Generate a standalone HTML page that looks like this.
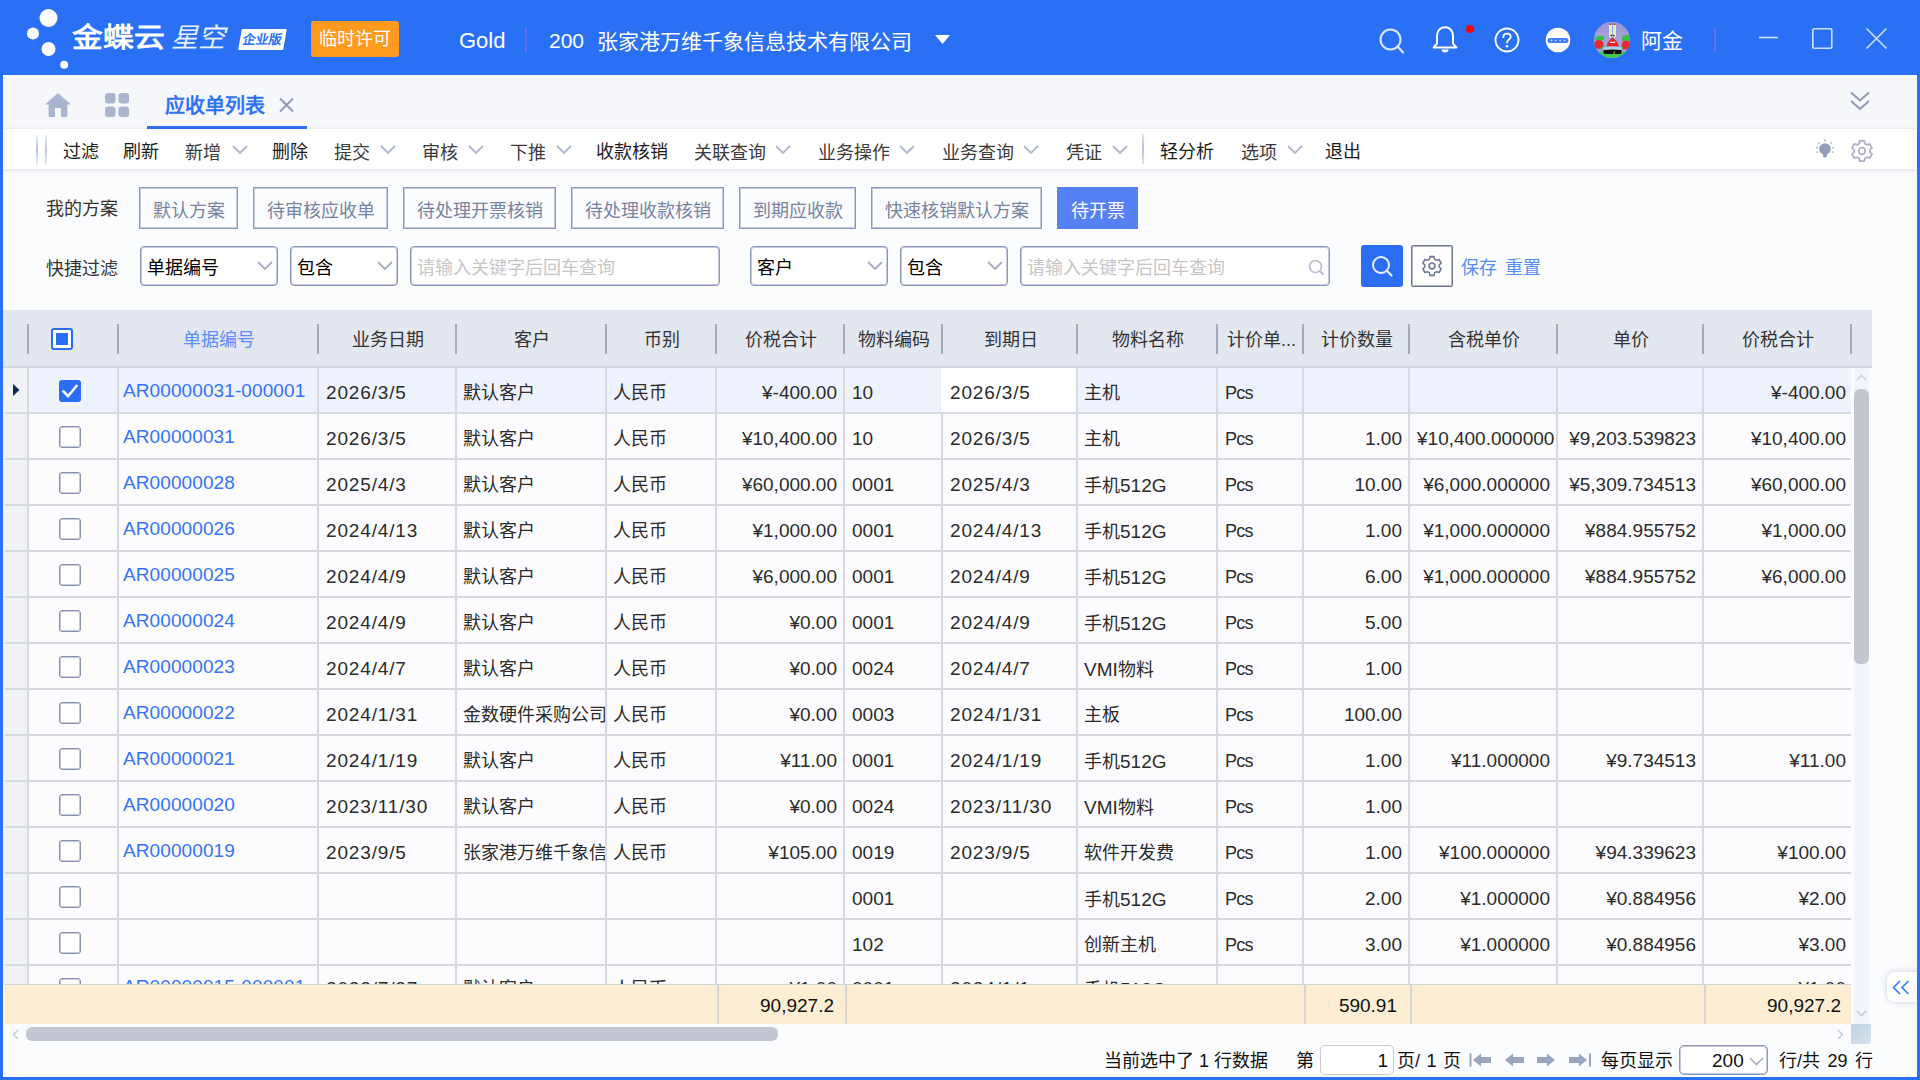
<!DOCTYPE html>
<html lang="zh-CN">
<head>
<meta charset="utf-8">
<title>应收单列表</title>
<style>
*{box-sizing:border-box;margin:0;padding:0}
html,body{width:1920px;height:1080px;overflow:hidden}
body{position:relative;background:#2a70f5;font-family:"Liberation Sans",sans-serif;font-size:18px;color:#222}
.a{position:absolute}
#hdr{position:absolute;left:0;top:0;width:1920px;height:75px;background:#2a70f5;color:#fff}
#main{position:absolute;left:3px;top:75px;width:1914px;height:1002px;background:#fbfcfe;overflow:hidden}
#tabs{position:absolute;left:0;top:0;width:1914px;height:54px;background:#f5f7fb}
#tool{position:absolute;left:0;top:54px;width:1914px;height:40px;background:#fff;box-shadow:0 1px 4px rgba(60,70,100,.18)}
.tb{position:absolute;top:3px;height:40px;line-height:40px;font-size:18px;color:#1c1c1c;white-space:nowrap}
.tb.d{color:#3a3a3a;top:4px}
.chev{position:absolute;top:16px}
.sch{position:absolute;top:112px;height:42px;border:1px solid #8c98b7;box-shadow:inset 0 0 0 1px rgba(140,152,183,.5);color:#7783a0;font-size:18px;line-height:46px;text-align:center;white-space:nowrap}
.sel1{position:absolute;top:171px;height:40px;border:1px solid #8c98b7;box-shadow:inset 0 0 0 1px rgba(140,152,183,.5);border-radius:4px;background:#fff;font-size:18px;line-height:42px;color:#000;padding-left:6px;white-space:nowrap}
.ph{color:#c6c6c6}
#gh{position:absolute;left:0;top:235px;width:1869px;height:56px;background:#e3e7f0}
#ghl{position:absolute;left:0;top:291px;width:1869px;height:2px;background:#d3d6dd}
.hs{position:absolute;top:14px;width:2px;height:30px;background:#a6abb8}
.ht{position:absolute;top:0;height:56px;line-height:61px;text-align:center;font-size:18px;color:#333;white-space:nowrap;overflow:hidden}
.hl{color:#5b8df6}
.hchk{position:absolute;left:48px;top:18px;width:22px;height:22px;border:2px solid #2b6ef3;border-radius:3px;background:#fff}
.hchk b{position:absolute;left:3px;top:3px;width:12px;height:12px;background:#2b6ef3}
#gb{position:absolute;left:0;top:293px;width:1848px;height:616px;overflow:hidden;background:#fcfcfe}
.row{position:absolute;left:0;width:1848px;height:46px}
.row.sel{background:#eef2fd}
.ind{position:absolute;left:0;top:0;width:26px;height:46px;background:#f0f2f6;border-right:2px solid #d6d9e0}
.row:after{content:"";position:absolute;left:2px;right:0;bottom:0;height:2px;background:#d6d9e0}
.c{position:absolute;top:0;height:46px;line-height:49px;border-left:2px solid #d6d9e0;padding:0 6px 0 7px;font-size:19px;color:#2b2b2b;white-space:nowrap;overflow:hidden}
.c.z{font-size:18px;line-height:51px;padding-left:6px}
.c.z i{font-style:normal;font-size:19px}
.c.r{text-align:right}
.c.d{letter-spacing:.85px}
.c.u{font-size:18px;letter-spacing:-.7px;line-height:50px}
.c.last{padding-right:4px}
.row.lr .c{line-height:45px}
.row.lr .c.z{line-height:47px}
.row.lr .c.lk{line-height:42px}
.c.lk{color:#3673f4;line-height:46px;padding-left:4px;letter-spacing:.1px}
.c.foc{background:#fff;border-left-color:#fff;height:44px}
.cb{position:absolute;left:56px;top:12px;width:22px;height:22px;border:1px solid #8893ae;box-shadow:inset 0 0 0 1px rgba(136,147,174,.5);border-radius:3px;background:#fff}
.cb.on{border:none;box-shadow:none;background:#2b6ef3}
.cb.on svg{position:absolute;left:0;top:0}
.vline{position:absolute;top:0;width:2px;height:616px;background:#d6d9e0}
#vs{position:absolute;left:1851px;top:293px;width:15px;height:656px;background:#f2f5fb}
#vs .th{position:absolute;left:0px;top:21px;width:15px;height:275px;border-radius:6px;background:#c2c7d1}
#sum{position:absolute;left:2px;top:909px;width:1846px;height:40px;background:#fdeed3;border-top:1.5px solid #cfd2d8}
.sc{position:absolute;top:0;height:39px;line-height:42px;font-size:19px;color:#111;text-align:right;border-left:2px solid #d9d6cf;border-right:2px solid #d9d6cf;padding-right:9px}
#hsb{position:absolute;left:0;top:949px;width:1869px;height:20px;background:#fbfcfe}
#hsb .th{position:absolute;left:23px;top:3px;width:752px;height:14px;border-radius:6px;background:#c2c7d1}
.pg{position:absolute;top:969px;height:33px;line-height:35px;font-size:18px;color:#111;white-space:nowrap}
</style>
</head>
<body>
<div id="hdr">
  <!-- logo dots -->
  <svg class="a" style="left:20px;top:4px" width="60" height="70" viewBox="20 4 60 70">
    <circle cx="48.5" cy="18" r="9" fill="#fff"/>
    <circle cx="33" cy="33.5" r="6" fill="#fff"/>
    <circle cx="48.5" cy="49" r="7" fill="#fff"/>
    <circle cx="64.2" cy="64.8" r="4" fill="#fff"/>
  </svg>
  <div class="a" style="left:72px;top:19px;height:38px;line-height:38px;font-size:27px;font-weight:bold;color:#fff;white-space:nowrap;transform:scaleX(1.14);transform-origin:0 0">金蝶云</div>
  <div class="a" style="left:171px;top:19px;height:38px;line-height:38px;font-size:27px;font-weight:normal;font-style:italic;color:#e8f0ff;white-space:nowrap">星空</div>
  <div class="a" style="left:240px;top:29px;width:45px;height:21px;background:#fff;transform:skewX(-10deg);border-radius:1px"></div>
  <div class="a" style="left:240px;top:29px;width:45px;height:21px;line-height:21px;text-align:center;font-size:13px;font-weight:bold;color:#2a70f5;transform:skewX(-10deg);white-space:nowrap">企业版</div>
  <div class="a" style="left:311px;top:21px;width:88px;height:36px;background:#ff9a1e;border-radius:3px;color:#fff;font-size:18px;line-height:36px;text-align:center;white-space:nowrap">临时许可</div>
  <div class="a" style="left:459px;top:23px;height:36px;line-height:36px;font-size:22px;color:#fff">Gold</div>
  <div class="a" style="left:525px;top:28px;width:2px;height:24px;background:#5f6ff2"></div>
  <div class="a" style="left:549px;top:23px;height:36px;line-height:36px;font-size:21px;color:#fff;white-space:nowrap">200</div>
  <div class="a" style="left:597px;top:24px;height:36px;line-height:36px;font-size:21px;color:#fff;white-space:nowrap">张家港万维千象信息技术有限公司</div>
  <svg class="a" style="left:935px;top:35px" width="15" height="9" viewBox="0 0 15 9"><path d="M0 0H15L7.5 9Z" fill="#fff"/></svg>
  <!-- search -->
  <svg class="a" style="left:1377px;top:26px" width="30" height="30" viewBox="0 0 30 30"><circle cx="13.5" cy="13.5" r="10" fill="none" stroke="#dbe7ff" stroke-width="2"/><path d="M20.5 20.5L26 26.5" stroke="#dbe7ff" stroke-width="2.2" stroke-linecap="round"/></svg>
  <!-- bell -->
  <svg class="a" style="left:1430px;top:24px" width="30" height="32" viewBox="0 0 30 32"><path d="M15 3.2C9.8 3.2 7 7.3 7 12V19.5L3.6 23.4H26.4L23 19.5V12C23 7.3 20.2 3.2 15 3.2Z" fill="none" stroke="#fff" stroke-width="2" stroke-linejoin="round"/><path d="M11.5 25.5A3.5 3 0 0 0 18.5 25.5Z" fill="#fff"/></svg>
  <div class="a" style="left:1466px;top:25px;width:8px;height:8px;border-radius:4px;background:#f00"></div>
  <!-- help -->
  <svg class="a" style="left:1494px;top:27px" width="26" height="26" viewBox="0 0 26 26"><circle cx="13" cy="13" r="11.5" fill="none" stroke="#fff" stroke-width="1.8"/><path d="M9.3 10.2C9.3 7.9 11 6.6 13 6.6C15 6.6 16.7 7.9 16.7 9.9C16.7 12.4 13 12.6 13 15.6" fill="none" stroke="#fff" stroke-width="1.8" stroke-linecap="round"/><circle cx="13" cy="19.2" r="1.3" fill="#fff"/></svg>
  <!-- robot -->
  <svg class="a" style="left:1545px;top:27px" width="26" height="26" viewBox="0 0 26 26"><circle cx="13" cy="13" r="12.3" fill="#fff"/><rect x="2.6" y="11" width="20.8" height="5" rx="2.5" fill="#3b7af6"/><circle cx="6.5" cy="13.5" r="0.9" fill="#b9d0ff"/><circle cx="10.8" cy="13.5" r="0.9" fill="#b9d0ff"/><circle cx="15.2" cy="13.5" r="0.9" fill="#b9d0ff"/><circle cx="19.5" cy="13.5" r="0.9" fill="#b9d0ff"/></svg>
  <!-- avatar -->
  <svg class="a" style="left:1594px;top:22px" width="36" height="36" viewBox="0 0 36 36">
    <defs><clipPath id="av"><circle cx="18" cy="18" r="18"/></clipPath></defs>
    <g clip-path="url(#av)">
      <rect width="36" height="36" fill="#a59fd8"/>
      <rect x="0" y="0" width="36" height="10" fill="#9d99d6"/>
      <path d="M4 30Q18 27.5 32 30L36 36H0Z" fill="#3ec84c"/>
      <rect x="15" y="1.8" width="3" height="14" rx="1.4" fill="#d9f5b2"/><rect x="19" y="1.8" width="3" height="14" rx="1.4" fill="#d9f5b2"/>
      <rect x="15.3" y="1.6" width="2.2" height="1.2" fill="#5a2a2a"/><rect x="19.4" y="1.6" width="2.2" height="1.2" fill="#5a2a2a"/>
      <circle cx="17.2" cy="13.6" r="0.8" fill="#111"/><circle cx="19.8" cy="13.6" r="0.8" fill="#111"/>
      <path d="M18.4 15.5Q19.5 16.5 20.5 17.5Q24.5 20 24.8 25.8H12.6Q13 20 16.5 17.5Q17.5 16.5 18.4 15.5Z" fill="#e6232a"/>
      <rect x="16" y="19.7" width="5.2" height="1.3" rx="0.4" fill="#fff"/>
      <ellipse cx="4.8" cy="22.3" rx="4.6" ry="4.6" fill="#e32a2e"/>
      <ellipse cx="32.2" cy="23" rx="4.4" ry="4.8" fill="#e32a2e"/>
      <path d="M0.8 18Q1 14.5 3.5 14.2Q6 13.2 8 14Q10.8 14 10.6 16.2L8 18.3Z" fill="#3cba4a"/>
      <path d="M28 18.8Q27.6 14 30 13.4Q33 12.4 36 14V18.8Z" fill="#3cba4a"/>
      <path d="M6.5 27.5L10.5 23.5" stroke="#3cba4a" stroke-width="1.2"/><path d="M29.5 28L27.5 23.5" stroke="#3cba4a" stroke-width="1.2"/>
      <path d="M9.6 25.5Q18 23 27.3 25.5V29H9.6Z" fill="#a8d3ee"/>
      <path d="M9.2 28.2Q18 27 27.8 28.2L27 32H10Z" fill="#0c0c0c"/>
      <rect x="19.6" y="29.6" width="1" height="2.2" fill="#e9c21b"/>
    </g>
  </svg>
  <div class="a" style="left:1641px;top:23px;height:36px;line-height:36px;font-size:21px;color:#fff;white-space:nowrap">阿金</div>
  <div class="a" style="left:1714px;top:28px;width:2px;height:24px;background:#5f6ff2"></div>
  <svg class="a" style="left:1755px;top:24px" width="140" height="30" viewBox="1755 24 140 30"><path d="M1759 37.5H1778" stroke="#cfe0ff" stroke-width="1.6"/><rect x="1812.8" y="28.8" width="19" height="19.4" rx="1.5" fill="none" stroke="#cfe0ff" stroke-width="1.6"/><path d="M1866.5 28.5L1886.5 48.5M1886.5 28.5L1866.5 48.5" stroke="#cfe0ff" stroke-width="1.6"/></svg>
</div>

<div id="main">
  <div id="tabs">
    <!-- home -->
    <svg class="a" style="left:42px;top:18px" width="26" height="24" viewBox="0 0 26 24"><path d="M13 0L0 11.5H3.6V22.5Q3.6 24 5 24H10V15H16V24H21Q22.4 24 22.4 22.5V11.5H26Z" fill="#a9b4ce"/></svg>
    <!-- grid -->
    <svg class="a" style="left:102px;top:18px" width="24" height="24" viewBox="0 0 24 24"><rect x="0" y="0" width="10.5" height="10.5" rx="3" fill="#a9b4ce"/><rect x="13.5" y="0" width="10.5" height="10.5" rx="3" fill="#a9b4ce"/><rect x="0" y="13.5" width="10.5" height="10.5" rx="3" fill="#a9b4ce"/><rect x="13.5" y="13.5" width="10.5" height="10.5" rx="3" fill="#a9b4ce"/></svg>
    <div class="a" style="left:162px;top:15px;height:32px;line-height:32px;font-size:20px;font-weight:bold;color:#2e73f3;white-space:nowrap">应收单列表</div>
    <svg class="a" style="left:276px;top:23px" width="15" height="14" viewBox="0 0 15 14"><path d="M1 0.5L14 13.5M14 0.5L1 13.5" stroke="#8e99b3" stroke-width="2"/></svg>
    <div class="a" style="left:144px;top:51px;width:160px;height:3px;background:#2e73f3"></div>
    <svg class="a" style="left:1846px;top:15px" width="22" height="22" viewBox="0 0 22 22"><path d="M2 2.5L11 10.5L20 2.5M2 11L11 19L20 11" fill="none" stroke="#8e99b3" stroke-width="2"/></svg>
  </div>
  <div id="tool">
    <div class="a" style="left:33px;top:6px;width:2px;height:30px;background:linear-gradient(#e8edf7,#b9c5e0,#e8edf7)"></div>
    <div class="a" style="left:42px;top:6px;width:2px;height:30px;background:linear-gradient(#e8edf7,#b9c5e0,#e8edf7)"></div>
    <div class="tb" style="left:60px">过滤</div>
    <div class="tb" style="left:120px">刷新</div>
    <div class="tb d" style="left:182px">新增</div><svg class="chev" style="left:229px" width="16" height="9" viewBox="0 0 16 9"><path d="M1 1L8 8L15 1" fill="none" stroke="#b0b8cc" stroke-width="1.8"/></svg>
    <div class="tb" style="left:269px">删除</div>
    <div class="tb d" style="left:331px">提交</div><svg class="chev" style="left:377px" width="16" height="9" viewBox="0 0 16 9"><path d="M1 1L8 8L15 1" fill="none" stroke="#b0b8cc" stroke-width="1.8"/></svg>
    <div class="tb d" style="left:419px">审核</div><svg class="chev" style="left:465px" width="16" height="9" viewBox="0 0 16 9"><path d="M1 1L8 8L15 1" fill="none" stroke="#b0b8cc" stroke-width="1.8"/></svg>
    <div class="tb d" style="left:507px">下推</div><svg class="chev" style="left:553px" width="16" height="9" viewBox="0 0 16 9"><path d="M1 1L8 8L15 1" fill="none" stroke="#b0b8cc" stroke-width="1.8"/></svg>
    <div class="tb" style="left:593px">收款核销</div>
    <div class="tb d" style="left:691px">关联查询</div><svg class="chev" style="left:772px" width="16" height="9" viewBox="0 0 16 9"><path d="M1 1L8 8L15 1" fill="none" stroke="#b0b8cc" stroke-width="1.8"/></svg>
    <div class="tb d" style="left:815px">业务操作</div><svg class="chev" style="left:896px" width="16" height="9" viewBox="0 0 16 9"><path d="M1 1L8 8L15 1" fill="none" stroke="#b0b8cc" stroke-width="1.8"/></svg>
    <div class="tb d" style="left:939px">业务查询</div><svg class="chev" style="left:1020px" width="16" height="9" viewBox="0 0 16 9"><path d="M1 1L8 8L15 1" fill="none" stroke="#b0b8cc" stroke-width="1.8"/></svg>
    <div class="tb d" style="left:1063px">凭证</div><svg class="chev" style="left:1109px" width="16" height="9" viewBox="0 0 16 9"><path d="M1 1L8 8L15 1" fill="none" stroke="#b0b8cc" stroke-width="1.8"/></svg>
    <div class="a" style="left:1139px;top:5px;width:2px;height:30px;background:linear-gradient(#dfe6f3,#b3c1de,#dfe6f3)"></div>
    <div class="tb" style="left:1157px">轻分析</div>
    <div class="tb d" style="left:1238px">选项</div><svg class="chev" style="left:1284px" width="16" height="9" viewBox="0 0 16 9"><path d="M1 1L8 8L15 1" fill="none" stroke="#b0b8cc" stroke-width="1.8"/></svg>
    <div class="tb" style="left:1322px">退出</div>
    <!-- bulb -->
    <svg class="a" style="left:1812px;top:10px" width="20" height="20" viewBox="0 0 20 20"><circle cx="10" cy="10" r="5.8" fill="#919dba"/><path d="M8 15H12V17.5Q10 19.5 8 17.5Z" fill="#919dba"/><path d="M10 0.5V2.5M3.3 3.3L4.6 4.6M16.7 3.3L15.4 4.6M1 8.5L2.8 9M19 8.5L17.2 9M1.5 13.5L3 12.8M18.5 13.5L17 12.8" stroke="#919dba" stroke-width="1.2"/></svg>
    <!-- gear -->
    <svg class="a" style="left:1847px;top:10px" width="24" height="24" viewBox="0 0 24 24"><path d="M9.7 1.8h4.6l.6 2.9 2 1.1 2.8-.9 2.3 4-2.2 2v2.2l2.2 2-2.3 4-2.8-.9-2 1.1-.6 2.9H9.7l-.6-2.9-2-1.1-2.8.9-2.3-4 2.2-2v-2.2l-2.2-2 2.3-4 2.8.9 2-1.1z" fill="none" stroke="#a9b2c8" stroke-width="1.8" stroke-linejoin="round"/><circle cx="12" cy="12" r="3.3" fill="none" stroke="#a9b2c8" stroke-width="1.8"/></svg>
  </div>

  <!-- scheme row -->
  <div class="a" style="left:43px;top:112px;height:42px;line-height:44px;font-size:18px;color:#333;white-space:nowrap">我的方案</div>
  <div class="sch" style="left:136px;width:99px">默认方案</div>
  <div class="sch" style="left:250px;width:135px">待审核应收单</div>
  <div class="sch" style="left:400px;width:153px">待处理开票核销</div>
  <div class="sch" style="left:568px;width:153px">待处理收款核销</div>
  <div class="sch" style="left:736px;width:117px">到期应收款</div>
  <div class="sch" style="left:868px;width:171px">快速核销默认方案</div>
  <div class="sch" style="left:1054px;width:81px;background:#5581f3;border-color:#5581f3;box-shadow:none;color:#fff">待开票</div>

  <!-- quick filter row -->
  <div class="a" style="left:43px;top:171px;height:40px;line-height:46px;font-size:18px;color:#333;white-space:nowrap">快捷过滤</div>
  <div class="sel1" style="left:137px;width:138px">单据编号<svg class="a" style="left:116px;top:14px" width="16" height="9" viewBox="0 0 16 9"><path d="M1 1L8 8L15 1" fill="none" stroke="#a5adc2" stroke-width="1.8"/></svg></div>
  <div class="sel1" style="left:287px;width:108px">包含<svg class="a" style="left:86px;top:14px" width="16" height="9" viewBox="0 0 16 9"><path d="M1 1L8 8L15 1" fill="none" stroke="#a5adc2" stroke-width="1.8"/></svg></div>
  <div class="sel1 ph" style="left:407px;width:310px">请输入关键字后回车查询</div>
  <div class="sel1" style="left:747px;width:138px">客户<svg class="a" style="left:116px;top:14px" width="16" height="9" viewBox="0 0 16 9"><path d="M1 1L8 8L15 1" fill="none" stroke="#a5adc2" stroke-width="1.8"/></svg></div>
  <div class="sel1" style="left:897px;width:108px">包含<svg class="a" style="left:86px;top:14px" width="16" height="9" viewBox="0 0 16 9"><path d="M1 1L8 8L15 1" fill="none" stroke="#a5adc2" stroke-width="1.8"/></svg></div>
  <div class="sel1 ph" style="left:1017px;width:310px">请输入关键字后回车查询<svg class="a" style="left:287px;top:12px" width="17" height="17" viewBox="0 0 17 17"><circle cx="7.5" cy="7.5" r="6" fill="none" stroke="#b4bccf" stroke-width="1.7"/><path d="M11.8 11.8L15.5 15.5" stroke="#b4bccf" stroke-width="1.8"/></svg></div>
  <div class="a" style="left:1358px;top:170px;width:42px;height:42px;background:#2b6ef3;border-radius:3px"><svg class="a" style="left:10px;top:10px" width="23" height="23" viewBox="0 0 23 23"><circle cx="10" cy="10" r="8" fill="none" stroke="#eaf1ff" stroke-width="2"/><path d="M15.8 15.8L20.5 20.5" stroke="#eaf1ff" stroke-width="2.2" stroke-linecap="round"/></svg></div>
  <div class="a" style="left:1408px;top:170px;width:42px;height:42px;background:#fff;border:1px solid #6e7893;box-shadow:inset 0 0 0 1px rgba(110,120,147,.55);border-radius:2px"><svg class="a" style="left:9px;top:9px" width="22" height="22" viewBox="0 0 24 24"><path d="M9.7 1.8h4.6l.6 2.9 2 1.1 2.8-.9 2.3 4-2.2 2v2.2l2.2 2-2.3 4-2.8-.9-2 1.1-.6 2.9H9.7l-.6-2.9-2-1.1-2.8.9-2.3-4 2.2-2v-2.2l-2.2-2 2.3-4 2.8.9 2-1.1z" fill="none" stroke="#6e7893" stroke-width="1.7" stroke-linejoin="round"/><circle cx="12" cy="12" r="3.2" fill="none" stroke="#6e7893" stroke-width="1.7"/></svg></div>
  <div class="a" style="left:1458px;top:171px;height:40px;line-height:45px;font-size:18px;color:#5a8cf5;white-space:nowrap">保存</div>
  <div class="a" style="left:1502px;top:171px;height:40px;line-height:45px;font-size:18px;color:#5a8cf5;white-space:nowrap">重置</div>

  <!-- grid header -->
  <div id="gh">
<div class="hs" style="left:24px"></div>
<div class="hchk"><b></b></div>
<div class="hs" style="left:114px"></div>
<div class="ht hl" style="left:116px;width:200px">单据编号</div>
<div class="hs" style="left:314px"></div>
<div class="ht" style="left:316px;width:138px">业务日期</div>
<div class="hs" style="left:452px"></div>
<div class="ht" style="left:454px;width:150px">客户</div>
<div class="hs" style="left:602px"></div>
<div class="ht" style="left:604px;width:110px">币别</div>
<div class="hs" style="left:712px"></div>
<div class="ht" style="left:714px;width:128px">价税合计</div>
<div class="hs" style="left:840px"></div>
<div class="ht" style="left:842px;width:98px">物料编码</div>
<div class="hs" style="left:938px"></div>
<div class="ht" style="left:940px;width:135px">到期日</div>
<div class="hs" style="left:1073px"></div>
<div class="ht" style="left:1075px;width:140px">物料名称</div>
<div class="hs" style="left:1213px"></div>
<div class="ht" style="left:1215px;width:86px;text-align:left;padding-left:9px">计价单...</div>
<div class="hs" style="left:1299px"></div>
<div class="ht" style="left:1301px;width:106px">计价数量</div>
<div class="hs" style="left:1405px"></div>
<div class="ht" style="left:1407px;width:148px">含税单价</div>
<div class="hs" style="left:1553px"></div>
<div class="ht" style="left:1555px;width:146px">单价</div>
<div class="hs" style="left:1699px"></div>
<div class="ht" style="left:1701px;width:148px">价税合计</div>
<div class="hs" style="left:1847px"></div>
  </div>
  <div id="ghl"></div>
  <div id="gb">
<div class="row sel" style="top:0px">
<div class="ind"><svg width="7" height="12" viewBox="0 0 7 12" style="position:absolute;left:10px;top:16px"><path d="M0 0L6.5 6L0 12Z" fill="#10295c"/></svg></div>
<div class="cb on"><svg width="22" height="22" viewBox="0 0 22 22"><path d="M4.5 11.5L9 16L17.5 6" fill="none" stroke="#fff" stroke-width="2.6" stroke-linecap="square"/></svg></div>
<div class="c lk" style="left:114px;width:200px">AR00000031-000001</div>
<div class="c d" style="left:314px;width:138px">2026/3/5</div>
<div class="c z" style="left:452px;width:150px">默认客户</div>
<div class="c z" style="left:602px;width:110px">人民币</div>
<div class="c r" style="left:712px;width:128px">¥-400.00</div>
<div class="c" style="left:840px;width:98px">10</div>
<div class="c d foc" style="left:938px;width:135px">2026/3/5</div>
<div class="c z" style="left:1073px;width:140px">主机</div>
<div class="c u" style="left:1213px;width:86px">Pcs</div>
<div class="c r" style="left:1299px;width:106px"></div>
<div class="c r" style="left:1405px;width:148px"></div>
<div class="c r" style="left:1553px;width:146px"></div>
<div class="c r last" style="left:1699px;width:148px">¥-400.00</div>
</div>
<div class="row" style="top:46px">
<div class="ind"></div>
<div class="cb"></div>
<div class="c lk" style="left:114px;width:200px">AR00000031</div>
<div class="c d" style="left:314px;width:138px">2026/3/5</div>
<div class="c z" style="left:452px;width:150px">默认客户</div>
<div class="c z" style="left:602px;width:110px">人民币</div>
<div class="c r" style="left:712px;width:128px">¥10,400.00</div>
<div class="c" style="left:840px;width:98px">10</div>
<div class="c d" style="left:938px;width:135px">2026/3/5</div>
<div class="c z" style="left:1073px;width:140px">主机</div>
<div class="c u" style="left:1213px;width:86px">Pcs</div>
<div class="c r" style="left:1299px;width:106px">1.00</div>
<div class="c r" style="left:1405px;width:148px">¥10,400.000000</div>
<div class="c r" style="left:1553px;width:146px">¥9,203.539823</div>
<div class="c r last" style="left:1699px;width:148px">¥10,400.00</div>
</div>
<div class="row" style="top:92px">
<div class="ind"></div>
<div class="cb"></div>
<div class="c lk" style="left:114px;width:200px">AR00000028</div>
<div class="c d" style="left:314px;width:138px">2025/4/3</div>
<div class="c z" style="left:452px;width:150px">默认客户</div>
<div class="c z" style="left:602px;width:110px">人民币</div>
<div class="c r" style="left:712px;width:128px">¥60,000.00</div>
<div class="c" style="left:840px;width:98px">0001</div>
<div class="c d" style="left:938px;width:135px">2025/4/3</div>
<div class="c z" style="left:1073px;width:140px">手机<i>512G</i></div>
<div class="c u" style="left:1213px;width:86px">Pcs</div>
<div class="c r" style="left:1299px;width:106px">10.00</div>
<div class="c r" style="left:1405px;width:148px">¥6,000.000000</div>
<div class="c r" style="left:1553px;width:146px">¥5,309.734513</div>
<div class="c r last" style="left:1699px;width:148px">¥60,000.00</div>
</div>
<div class="row" style="top:138px">
<div class="ind"></div>
<div class="cb"></div>
<div class="c lk" style="left:114px;width:200px">AR00000026</div>
<div class="c d" style="left:314px;width:138px">2024/4/13</div>
<div class="c z" style="left:452px;width:150px">默认客户</div>
<div class="c z" style="left:602px;width:110px">人民币</div>
<div class="c r" style="left:712px;width:128px">¥1,000.00</div>
<div class="c" style="left:840px;width:98px">0001</div>
<div class="c d" style="left:938px;width:135px">2024/4/13</div>
<div class="c z" style="left:1073px;width:140px">手机<i>512G</i></div>
<div class="c u" style="left:1213px;width:86px">Pcs</div>
<div class="c r" style="left:1299px;width:106px">1.00</div>
<div class="c r" style="left:1405px;width:148px">¥1,000.000000</div>
<div class="c r" style="left:1553px;width:146px">¥884.955752</div>
<div class="c r last" style="left:1699px;width:148px">¥1,000.00</div>
</div>
<div class="row" style="top:184px">
<div class="ind"></div>
<div class="cb"></div>
<div class="c lk" style="left:114px;width:200px">AR00000025</div>
<div class="c d" style="left:314px;width:138px">2024/4/9</div>
<div class="c z" style="left:452px;width:150px">默认客户</div>
<div class="c z" style="left:602px;width:110px">人民币</div>
<div class="c r" style="left:712px;width:128px">¥6,000.00</div>
<div class="c" style="left:840px;width:98px">0001</div>
<div class="c d" style="left:938px;width:135px">2024/4/9</div>
<div class="c z" style="left:1073px;width:140px">手机<i>512G</i></div>
<div class="c u" style="left:1213px;width:86px">Pcs</div>
<div class="c r" style="left:1299px;width:106px">6.00</div>
<div class="c r" style="left:1405px;width:148px">¥1,000.000000</div>
<div class="c r" style="left:1553px;width:146px">¥884.955752</div>
<div class="c r last" style="left:1699px;width:148px">¥6,000.00</div>
</div>
<div class="row" style="top:230px">
<div class="ind"></div>
<div class="cb"></div>
<div class="c lk" style="left:114px;width:200px">AR00000024</div>
<div class="c d" style="left:314px;width:138px">2024/4/9</div>
<div class="c z" style="left:452px;width:150px">默认客户</div>
<div class="c z" style="left:602px;width:110px">人民币</div>
<div class="c r" style="left:712px;width:128px">¥0.00</div>
<div class="c" style="left:840px;width:98px">0001</div>
<div class="c d" style="left:938px;width:135px">2024/4/9</div>
<div class="c z" style="left:1073px;width:140px">手机<i>512G</i></div>
<div class="c u" style="left:1213px;width:86px">Pcs</div>
<div class="c r" style="left:1299px;width:106px">5.00</div>
<div class="c r" style="left:1405px;width:148px"></div>
<div class="c r" style="left:1553px;width:146px"></div>
<div class="c r last" style="left:1699px;width:148px"></div>
</div>
<div class="row" style="top:276px">
<div class="ind"></div>
<div class="cb"></div>
<div class="c lk" style="left:114px;width:200px">AR00000023</div>
<div class="c d" style="left:314px;width:138px">2024/4/7</div>
<div class="c z" style="left:452px;width:150px">默认客户</div>
<div class="c z" style="left:602px;width:110px">人民币</div>
<div class="c r" style="left:712px;width:128px">¥0.00</div>
<div class="c" style="left:840px;width:98px">0024</div>
<div class="c d" style="left:938px;width:135px">2024/4/7</div>
<div class="c z" style="left:1073px;width:140px"><i>VMI</i>物料</div>
<div class="c u" style="left:1213px;width:86px">Pcs</div>
<div class="c r" style="left:1299px;width:106px">1.00</div>
<div class="c r" style="left:1405px;width:148px"></div>
<div class="c r" style="left:1553px;width:146px"></div>
<div class="c r last" style="left:1699px;width:148px"></div>
</div>
<div class="row" style="top:322px">
<div class="ind"></div>
<div class="cb"></div>
<div class="c lk" style="left:114px;width:200px">AR00000022</div>
<div class="c d" style="left:314px;width:138px">2024/1/31</div>
<div class="c z" style="left:452px;width:150px">金数硬件采购公司</div>
<div class="c z" style="left:602px;width:110px">人民币</div>
<div class="c r" style="left:712px;width:128px">¥0.00</div>
<div class="c" style="left:840px;width:98px">0003</div>
<div class="c d" style="left:938px;width:135px">2024/1/31</div>
<div class="c z" style="left:1073px;width:140px">主板</div>
<div class="c u" style="left:1213px;width:86px">Pcs</div>
<div class="c r" style="left:1299px;width:106px">100.00</div>
<div class="c r" style="left:1405px;width:148px"></div>
<div class="c r" style="left:1553px;width:146px"></div>
<div class="c r last" style="left:1699px;width:148px"></div>
</div>
<div class="row" style="top:368px">
<div class="ind"></div>
<div class="cb"></div>
<div class="c lk" style="left:114px;width:200px">AR00000021</div>
<div class="c d" style="left:314px;width:138px">2024/1/19</div>
<div class="c z" style="left:452px;width:150px">默认客户</div>
<div class="c z" style="left:602px;width:110px">人民币</div>
<div class="c r" style="left:712px;width:128px">¥11.00</div>
<div class="c" style="left:840px;width:98px">0001</div>
<div class="c d" style="left:938px;width:135px">2024/1/19</div>
<div class="c z" style="left:1073px;width:140px">手机<i>512G</i></div>
<div class="c u" style="left:1213px;width:86px">Pcs</div>
<div class="c r" style="left:1299px;width:106px">1.00</div>
<div class="c r" style="left:1405px;width:148px">¥11.000000</div>
<div class="c r" style="left:1553px;width:146px">¥9.734513</div>
<div class="c r last" style="left:1699px;width:148px">¥11.00</div>
</div>
<div class="row" style="top:414px">
<div class="ind"></div>
<div class="cb"></div>
<div class="c lk" style="left:114px;width:200px">AR00000020</div>
<div class="c d" style="left:314px;width:138px">2023/11/30</div>
<div class="c z" style="left:452px;width:150px">默认客户</div>
<div class="c z" style="left:602px;width:110px">人民币</div>
<div class="c r" style="left:712px;width:128px">¥0.00</div>
<div class="c" style="left:840px;width:98px">0024</div>
<div class="c d" style="left:938px;width:135px">2023/11/30</div>
<div class="c z" style="left:1073px;width:140px"><i>VMI</i>物料</div>
<div class="c u" style="left:1213px;width:86px">Pcs</div>
<div class="c r" style="left:1299px;width:106px">1.00</div>
<div class="c r" style="left:1405px;width:148px"></div>
<div class="c r" style="left:1553px;width:146px"></div>
<div class="c r last" style="left:1699px;width:148px"></div>
</div>
<div class="row" style="top:460px">
<div class="ind"></div>
<div class="cb"></div>
<div class="c lk" style="left:114px;width:200px">AR00000019</div>
<div class="c d" style="left:314px;width:138px">2023/9/5</div>
<div class="c z" style="left:452px;width:150px">张家港万维千象信息</div>
<div class="c z" style="left:602px;width:110px">人民币</div>
<div class="c r" style="left:712px;width:128px">¥105.00</div>
<div class="c" style="left:840px;width:98px">0019</div>
<div class="c d" style="left:938px;width:135px">2023/9/5</div>
<div class="c z" style="left:1073px;width:140px">软件开发费</div>
<div class="c u" style="left:1213px;width:86px">Pcs</div>
<div class="c r" style="left:1299px;width:106px">1.00</div>
<div class="c r" style="left:1405px;width:148px">¥100.000000</div>
<div class="c r" style="left:1553px;width:146px">¥94.339623</div>
<div class="c r last" style="left:1699px;width:148px">¥100.00</div>
</div>
<div class="row" style="top:506px">
<div class="ind"></div>
<div class="cb"></div>
<div class="c lk" style="left:114px;width:200px"></div>
<div class="c d" style="left:314px;width:138px"></div>
<div class="c z" style="left:452px;width:150px"></div>
<div class="c z" style="left:602px;width:110px"></div>
<div class="c r" style="left:712px;width:128px"></div>
<div class="c" style="left:840px;width:98px">0001</div>
<div class="c d" style="left:938px;width:135px"></div>
<div class="c z" style="left:1073px;width:140px">手机<i>512G</i></div>
<div class="c u" style="left:1213px;width:86px">Pcs</div>
<div class="c r" style="left:1299px;width:106px">2.00</div>
<div class="c r" style="left:1405px;width:148px">¥1.000000</div>
<div class="c r" style="left:1553px;width:146px">¥0.884956</div>
<div class="c r last" style="left:1699px;width:148px">¥2.00</div>
</div>
<div class="row" style="top:552px">
<div class="ind"></div>
<div class="cb"></div>
<div class="c lk" style="left:114px;width:200px"></div>
<div class="c d" style="left:314px;width:138px"></div>
<div class="c z" style="left:452px;width:150px"></div>
<div class="c z" style="left:602px;width:110px"></div>
<div class="c r" style="left:712px;width:128px"></div>
<div class="c" style="left:840px;width:98px">102</div>
<div class="c d" style="left:938px;width:135px"></div>
<div class="c z" style="left:1073px;width:140px">创新主机</div>
<div class="c u" style="left:1213px;width:86px">Pcs</div>
<div class="c r" style="left:1299px;width:106px">3.00</div>
<div class="c r" style="left:1405px;width:148px">¥1.000000</div>
<div class="c r" style="left:1553px;width:146px">¥0.884956</div>
<div class="c r last" style="left:1699px;width:148px">¥3.00</div>
</div>
<div class="row lr" style="top:598px">
<div class="ind"></div>
<div class="cb"></div>
<div class="c lk" style="left:114px;width:200px">AR00000015-000001</div>
<div class="c d" style="left:314px;width:138px">2023/7/27</div>
<div class="c z" style="left:452px;width:150px">默认客户</div>
<div class="c z" style="left:602px;width:110px">人民币</div>
<div class="c r" style="left:712px;width:128px">¥1.00</div>
<div class="c" style="left:840px;width:98px">0001</div>
<div class="c d" style="left:938px;width:135px">2024/1/1</div>
<div class="c z" style="left:1073px;width:140px">手机<i>512G</i></div>
<div class="c u" style="left:1213px;width:86px"></div>
<div class="c r" style="left:1299px;width:106px"></div>
<div class="c r" style="left:1405px;width:148px"></div>
<div class="c r" style="left:1553px;width:146px"></div>
<div class="c r last" style="left:1699px;width:148px">¥1.00</div>
</div>
  </div>
  <div id="vs">
    <svg class="a" style="left:2px;top:6px" width="11" height="7" viewBox="0 0 11 7"><path d="M1 6L5.5 1.5L10 6" fill="none" stroke="#d0d4dd" stroke-width="1.6"/></svg>
    <div class="th"></div>
    <svg class="a" style="left:2px;top:642px" width="11" height="7" viewBox="0 0 11 7"><path d="M1 1L5.5 5.5L10 1" fill="none" stroke="#c4c9d4" stroke-width="1.6"/></svg>
  </div>
  <div id="sum">
    <div class="sc" style="left:712px;width:130px;padding-right:11px">90,927.2</div>
    <div class="sc" style="left:1299px;width:108px;padding-right:13px">590.91</div>
    <div class="sc" style="left:1699px;width:147px;border-right:none;padding-right:10px">90,927.2</div>
  </div>
  <div id="hsb">
    <svg class="a" style="left:9px;top:5px" width="7" height="11" viewBox="0 0 7 11"><path d="M6 1L1.5 5.5L6 10" fill="none" stroke="#c9cdd6" stroke-width="1.6"/></svg>
    <div class="th"></div>
    <svg class="a" style="left:1834px;top:5px" width="7" height="11" viewBox="0 0 7 11"><path d="M1 1L5.5 5.5L1 10" fill="none" stroke="#c9cdd6" stroke-width="1.6"/></svg>
    <div class="a" style="left:1848px;top:0;width:20px;height:20px;background:linear-gradient(135deg,#c3d1e5,#d6e2ee);border-radius:0 0 3px 0"></div>
  </div>
  <!-- floating collapse -->
  <div class="a" style="left:1884px;top:897px;width:40px;height:30px;background:#fff;border-radius:8px 0 0 8px;box-shadow:0 0 6px rgba(60,80,140,.25)"><svg class="a" style="left:5px;top:8px" width="18" height="15" viewBox="0 0 18 15"><path d="M8 1L1.5 7.5L8 14M16.5 1L10 7.5L16.5 14" fill="none" stroke="#3c7af5" stroke-width="1.7"/></svg></div>

  <!-- pager -->
  <div class="pg" style="left:1101px">当前选中了 1 行数据</div>
  <div class="pg" style="left:1293px">第</div>
  <div class="a" style="left:1317px;top:970px;width:74px;height:30px;border:1.5px solid #c8cad0;border-radius:5px;background:#fff;font-size:19px;line-height:30px;text-align:right;padding-right:5px;color:#111">1</div>
  <div class="pg" style="left:1394px;word-spacing:1.5px">页/ 1 页</div>
  <svg class="a" style="left:1465px;top:978px" width="125" height="14" viewBox="1468 1053 125 14">
    <g fill="#9aa5be">
      <rect x="1469.5" y="1053.5" width="2" height="13"/><path d="M1473 1060L1481 1053.5V1057H1491V1063H1481V1066.5Z"/>
      <path d="M1505 1060L1513 1053.5V1057H1524V1063H1513V1066.5Z"/>
      <path d="M1555 1060L1547 1053.5V1057H1537V1063H1547V1066.5Z"/>
      <path d="M1587 1060L1579 1053.5V1057H1569V1063H1579V1066.5Z"/><rect x="1589" y="1053.5" width="2" height="13"/>
    </g>
  </svg>
  <div class="pg" style="left:1598px">每页显示</div>
  <div class="a" style="left:1676px;top:970px;width:89px;height:30px;border:1px solid #8c98b7;box-shadow:inset 0 0 0 1px rgba(140,152,183,.5);border-radius:5px;background:#fff;font-size:19px;line-height:30px;color:#111;padding-left:32px">200<svg class="a" style="left:69px;top:11px" width="15" height="9" viewBox="0 0 15 9"><path d="M1 1L7.5 7.5L14 1" fill="none" stroke="#a5adc2" stroke-width="1.6"/></svg></div>
  <div class="pg" style="left:1776px;word-spacing:2.5px">行/共 29 行</div>
</div>
</body>
</html>
